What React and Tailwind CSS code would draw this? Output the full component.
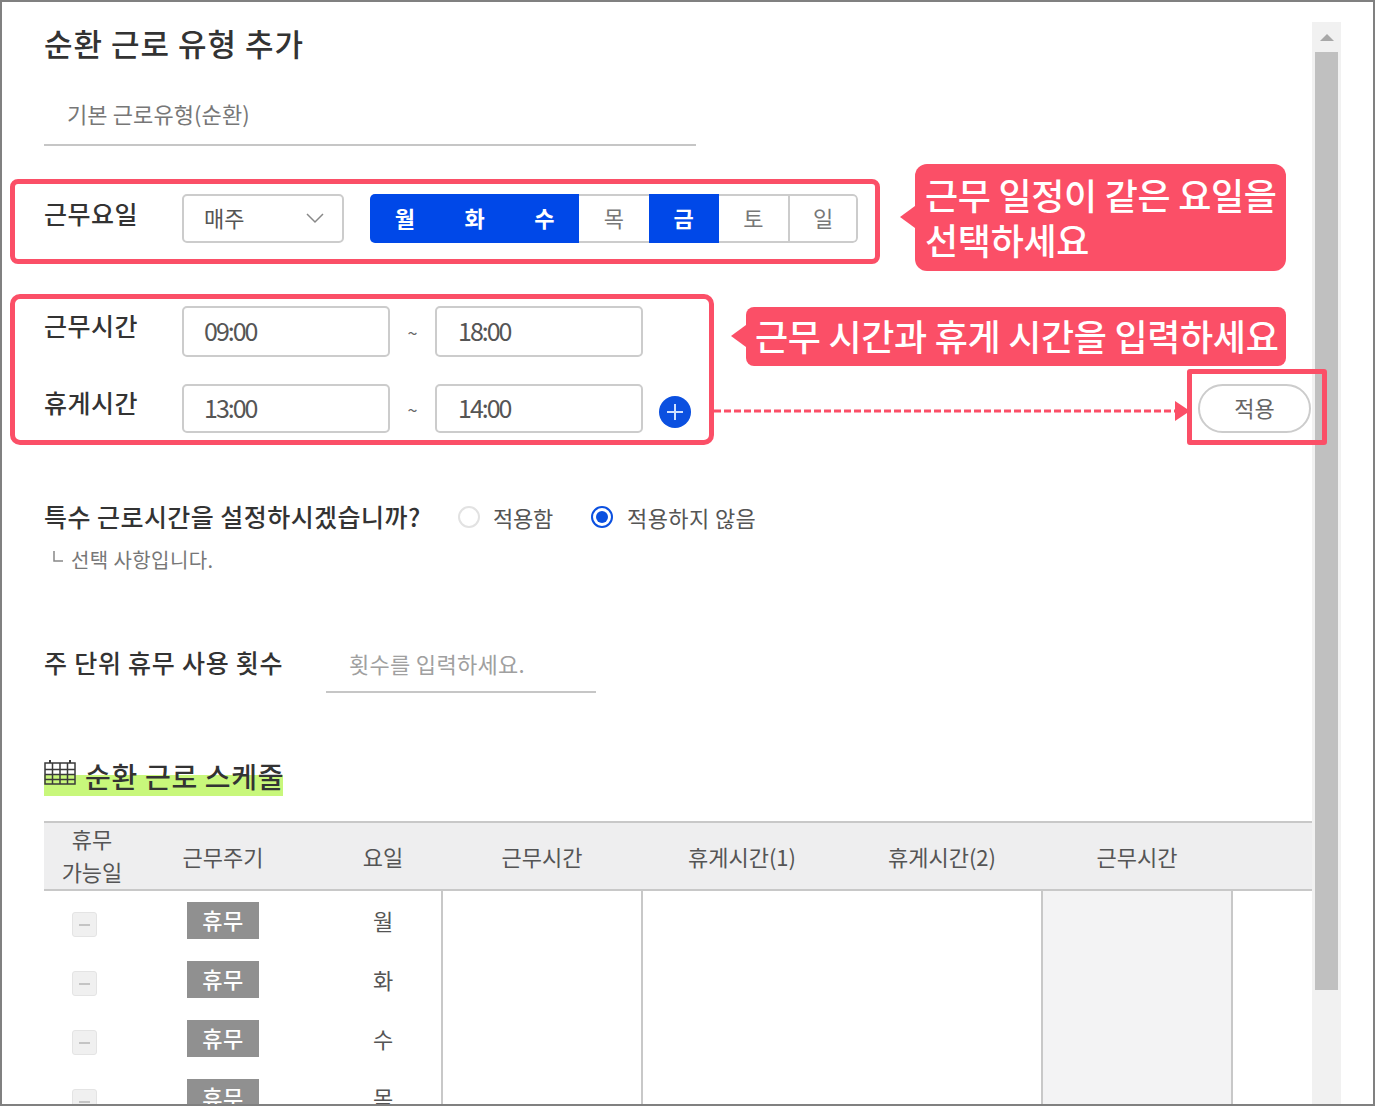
import React from "react";

const FONT = "font-['Noto_Sans_CJK_KR','Noto_Sans',sans-serif]";

function TimeInput({ value, extra = "" }) {
  return (
    <div className={`w-[208px] h-full border-2 border-[#cccccc] rounded-[5px] bg-white flex items-center pb-[2px] text-[25px] tracking-[-2px] text-[#555] ${extra}`}>
      {value}
    </div>
  );
}

function Tilde() {
  return <div className="w-[45px] pt-[2px] text-center text-[18px] text-[#666]">~</div>;
}

function Label({ children, extra = "" }) {
  return <div className={`w-[138px] text-[25px] font-medium text-[#333] tracking-[0.5px] ${extra}`}>{children}</div>;
}

function Callout({ className, tipY, children }) {
  return (
    <div className={`absolute bg-[#fb4f67] text-white font-medium text-[36px] leading-[45px] tracking-[-0.3px] ${className}`}>
      <div className="absolute left-[-15px] w-0 h-0 border-y-[11px] border-y-transparent border-r-[15px] border-r-[#fb4f67]" style={{ top: tipY }} />
      {children}
    </div>
  );
}

const DAYS = [
  ["월", true], ["화", true], ["수", true], ["목", false], ["금", true], ["토", false], ["일", false],
];

const COLS = "grid grid-cols-[96px_166px_136px_200px_200px_200px_190px_80px]";

function Row({ day }) {
  return (
    <div className="h-[59px] flex items-start">
      <div className="w-[96px] pt-[21px] pl-[28px]">
        <div className="w-[25px] h-[25px] rounded-[3px] border border-[#e4e4e4] bg-[#f0f0f0] flex items-center justify-center">
          <div className="w-[11px] h-[2px] bg-[#c4c4c4]" />
        </div>
      </div>
      <div className="w-[166px] pt-[11px] pl-[47px]">
        <div className="w-[72px] h-[37px] bg-[#909090] text-white text-[22px] font-medium tracking-[0.4px] pb-[2px] flex items-center justify-center">휴무</div>
      </div>
      <div className="w-[136px] pl-[18px] pt-[11px] text-center text-[22px] leading-[36px] text-[#555]">{day}</div>
    </div>
  );
}

export default function App() {
  return (
    <div className={`relative w-[1375px] h-[1106px] overflow-hidden bg-white border-2 border-[#808080] flex ${FONT}`}>
      <div className="w-[1310px] shrink-0 pl-[42px]">
        <div className="mt-[21px] h-[40px] leading-[40px] text-[31px] font-medium text-[#333] tracking-[1px]">순환 근로 유형 추가</div>

        <div className="mt-[31px] h-[52px] w-[652px] border-b-2 border-[#c6c6c6] pl-[23px] pb-[12px] flex items-center text-[22px] text-[#777] tracking-[0.1px]">기본 근로유형(순환)</div>

        <div className="mt-[48px] h-[49px] flex items-center">
          <Label extra="-mt-[10px]">근무요일</Label>
          <div className="w-[162px] h-full border-2 border-[#cccccc] rounded-[5px] flex items-center justify-between pl-[20px] pr-[18px] pb-[2px] text-[22px] text-[#555]">
            매주
            <svg className="mt-[2px]" width="18" height="11" viewBox="0 0 18 11" fill="none" stroke="#888" strokeWidth="1.5"><path d="M1 1l8 8 8-8" /></svg>
          </div>
          <div className="ml-[26px] w-[488px] h-full grid grid-cols-7 rounded-[5px] overflow-hidden">
            {DAYS.map(([d, on], i) => (
              <div key={d} className={`pb-[3px] flex items-center justify-center text-[22px] ${on ? "bg-[#0048e8] text-white font-bold" : `border-y-2 border-[#cccccc] text-[#777] ${i === 6 ? "border-x-2 rounded-r-[5px]" : ""}`}`}>{d}</div>
            ))}
          </div>
        </div>

        <div className="mt-[63px] h-[51px] flex items-center">
          <Label extra="-mt-[12px]">근무시간</Label>
          <TimeInput value="09:00" extra="pl-[20px]" />
          <Tilde />
          <TimeInput value="18:00" extra="pl-[21px]" />
        </div>

        <div className="mt-[27px] h-[49px] flex items-center">
          <Label extra="-mt-[12px]">휴게시간</Label>
          <TimeInput value="13:00" extra="pl-[20px]" />
          <Tilde />
          <TimeInput value="14:00" extra="pl-[21px]" />
          <div className="ml-[16px] mt-[6px] w-[32px] h-[32px] rounded-full bg-[#0b50e0] flex items-center justify-center">
            <svg width="18" height="18" viewBox="0 0 18 18" stroke="#cfe0ff" strokeWidth="2"><path d="M9 1v16M1 9h16" /></svg>
          </div>
          <div className="ml-auto mr-[1px] w-[113px] h-full rounded-full border-2 border-[#cccccc] pb-[2px] flex items-center justify-center text-[22px] text-[#666]">적용</div>
        </div>

        <div className="mt-[69px] h-[30px] flex items-center">
          <div className="w-[414px] text-[25px] font-medium text-[#333] tracking-[0.45px] whitespace-nowrap">특수 근로시간을 설정하시겠습니까?</div>
          <div className="w-[22px] h-[22px] rounded-full border-2 border-[#e2e2e2]" />
          <div className="ml-[13px] w-[98px] text-[22px] text-[#555] tracking-[-0.2px]">적용함</div>
          <div className="w-[22px] h-[22px] rounded-full border-2 border-[#0b50e0] flex items-center justify-center">
            <div className="w-[12px] h-[12px] rounded-full bg-[#0b50e0]" />
          </div>
          <div className="ml-[14px] text-[22px] text-[#555] tracking-[0.4px] whitespace-nowrap">적용하지 않음</div>
        </div>

        <div className="mt-[13px] h-[30px] pl-[8px] flex items-center text-[20px] text-[#777] tracking-[0.4px]">
          <svg className="mr-[7px] -mt-[6px]" width="12" height="14" viewBox="0 0 12 14" fill="none" stroke="#888" strokeWidth="1.5"><path d="M2 1v10h9" /></svg>
          선택 사항입니다.
        </div>

        <div className="mt-[65px] h-[53px] flex items-start">
          <div className="w-[282px] pt-[4px] text-[25px] font-medium text-[#333] tracking-[0.75px] whitespace-nowrap">주 단위 휴무 사용 횟수</div>
          <div className="w-[270px] h-full border-b-2 border-[#c6c6c6] pl-[23px] pt-[7px] text-[22px] text-[#a0a0a0] tracking-[0.3px] whitespace-nowrap">횟수를 입력하세요.</div>
        </div>

        <div className="mt-[67px] h-[36px] w-[239px] flex items-start bg-[linear-gradient(transparent_15px,#c8f77b_15px)]">
          <svg className="shrink-0" width="32" height="26" viewBox="0 0 32 26" fill="none" stroke="#3a3a3a" strokeWidth="1.5">
            <rect x="1" y="3" width="30" height="21" />
            <path d="M1 9.5h30M1 14.5h30M1 19.5h30M8.5 3v21M16 3v21M23.5 3v21" />
            <path d="M6 0v3M26 0v3" strokeWidth="2" />
          </svg>
          <div className="ml-[9px] text-[28px] leading-[36px] -mt-[2px] font-medium text-[#333] tracking-[0.7px] whitespace-nowrap">순환 근로 스케줄</div>
        </div>

        <div className="mt-[25px]">
          <div className={`${COLS} h-[70px] border-y-2 border-[#c8c8c8] bg-[#eeeeef] text-[22px] text-[#555] tracking-[0px] items-center text-center`}>
            <div className="leading-[33px] -mt-[2px]">휴무<br />가능일</div>
            <div>근무주기</div>
            <div className="pl-[18px]">요일</div>
            <div>근무시간</div>
            <div>휴게시간(1)</div>
            <div>휴게시간(2)</div>
            <div>근무시간</div>
            <div />
          </div>
          <div className={`${COLS} h-[300px]`}>
            <div className="col-span-3">
              <Row day="월" />
              <Row day="화" />
              <Row day="수" />
              <Row day="목" />
            </div>
            <div className="-ml-[1px] border-l-2 border-[#c8c8c8]" />
            <div className="-ml-[1px] border-l-2 border-[#c8c8c8]" />
            <div />
            <div className="-ml-[1px] -mr-[1px] border-x-2 border-[#c8c8c8] bg-[#f3f3f4]" />
            <div />
          </div>
        </div>
      </div>

      <div className="mt-[20px] w-[29px] shrink-0 bg-[#f1f1f1] flex flex-col items-center">
        <div className="h-[30px] flex items-center justify-center">
          <div className="w-0 h-0 border-x-[7px] border-x-transparent border-b-[7px] border-b-[#a8a8a8]" />
        </div>
        <div className="w-[23px] h-[938px] bg-[#c0c0c0]" />
      </div>

      {/* annotations */}
      <div className="absolute left-[8px] top-[177px] w-[870px] h-[85px] border-[5px] border-[#fb4f67] rounded-[8px]" />
      <div className="absolute left-[8px] top-[292px] w-[704px] h-[151px] border-[5px] border-[#fb4f67] rounded-[10px]" />
      <div className="absolute left-[1185px] top-[367px] w-[140px] h-[76px] border-[5px] border-[#fb4f67] rounded-[3px]" />
      <svg className="absolute left-[710px] top-[397px]" width="480" height="24" viewBox="0 0 480 24" fill="none">
        <path d="M2 12H466" stroke="#fb4f67" strokeWidth="3" strokeDasharray="7 3" />
        <path d="M463 2l15 10-15 10z" fill="#fb4f67" />
      </svg>
      <Callout className="left-[913px] top-[162px] w-[371px] h-[107px] rounded-[12px] pl-[10px] pt-[8px]" tipY={42}>
        <div>근무 일정이 같은 요일을</div>
        <div>선택하세요</div>
      </Callout>
      <Callout className="left-[744px] top-[305px] w-[540px] h-[59px] rounded-[8px] pl-[9px] pt-[6px]" tipY={18}>
        <div>근무 시간과 휴게 시간을 입력하세요</div>
      </Callout>
    </div>
  );
}
